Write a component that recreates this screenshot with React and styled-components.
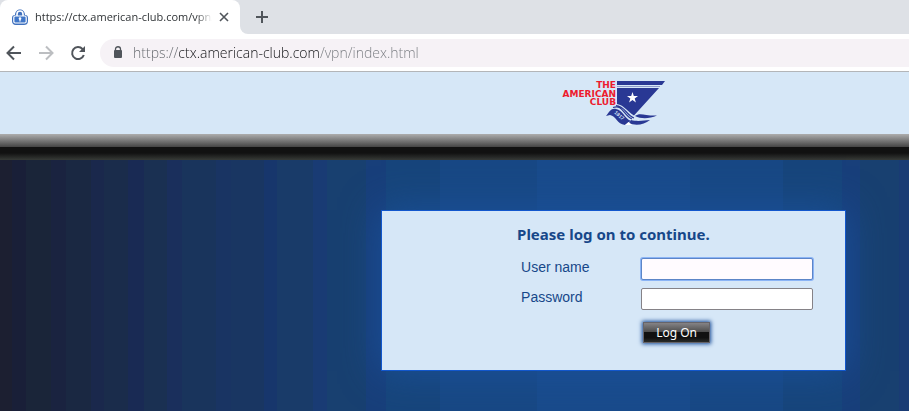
import React from "react";
import styled, { createGlobalStyle } from "styled-components";

const GlobalStyle = createGlobalStyle`
  * { box-sizing: border-box; }
  html, body, #root { height: 100%; }
  body { margin: 0; overflow: hidden; font-family: "Liberation Sans", Arial, sans-serif; }
  button, input { font: inherit; }
`;

const Window = styled.div`
  display: flex;
  flex-direction: column;
  min-height: 100%;
`;

const TabStrip = styled.div`
  display: flex;
  align-items: stretch;
  height: 34px;
  background: #dee1e6;
`;

const Tab = styled.div`
  display: flex;
  align-items: center;
  width: 240px;
  padding: 0 10px 0 12px;
  background: #fff;
  border-radius: 8px 8px 0 0;
`;

const TabTitle = styled.span`
  flex: 1;
  min-width: 0;
  margin: 0 6px 0 7px;
  overflow: hidden;
  white-space: nowrap;
  font: 11px/16px "Open Sans", sans-serif;
  color: #2f3336;
  mask-image: linear-gradient(to right, #000 calc(100% - 16px), transparent);
`;

const IconButton = styled.button`
  display: grid;
  place-items: center;
  width: ${(p) => p.$size}px;
  height: ${(p) => p.$size}px;
  padding: 0;
  border: 0;
  background: none;
  color: ${(p) => (p.disabled ? "#bcbec1" : "#50555b")};
`;

const StripBase = styled.div`
  display: flex;
  flex: 1;
  background: #fff;
`;

const NewTabArea = styled.div`
  display: flex;
  align-items: center;
  flex: 1;
  padding-left: 10px;
  border-bottom-left-radius: 8px;
  background: #dee1e6;
`;

const Toolbar = styled.div`
  display: flex;
  align-items: center;
  height: 38px;
  padding-left: 2px;
  background: #fff;
  border-bottom: 1px solid #b3b5b8;
`;

const NavGroup = styled.div`
  display: flex;
  gap: 8px;
  margin-right: 10px;
`;

const AddressBar = styled.label`
  display: flex;
  align-items: center;
  flex: 1;
  height: 28px;
  padding-left: 13px;
  border-radius: 14px 0 0 14px;
  background: #f6f2f6;
`;

const AddressInput = styled.input`
  flex: 1;
  min-width: 0;
  height: 24px;
  margin-left: 10px;
  padding: 0;
  border: 0;
  outline: 0;
  font: 300 14px/24px "Open Sans", sans-serif;
  color: transparent;
  caret-color: #202124;
  background: linear-gradient(to right, #62666b 46px, #101114 46px, #101114 187px, #777a7f 187px);
  background-clip: text;
`;

const Banner = styled.header`
  display: flex;
  justify-content: center;
  height: 62px;
  padding: 8px 0 0 35%;
  background: #d6e7f7;
`;

const Divider = styled.div`
  height: 26px;
  background: linear-gradient(#adadad 0, #444 13px, #111 13px, #111 19px, #373a37 26px);
`;

const Stage = styled.main`
  display: flex;
  flex: 1;
  align-items: flex-start;
  justify-content: center;
  padding: 50px 0 40px 35%;
  background: linear-gradient(to right,
    #1c1f31 0 12px, #191f38 12px 26px, #1a2539 26px 51px, #1a2340 51px 66px,
    #1a2842 66px 91px, #1a284c 91px 104px, #1a2c4b 104px 128px, #192a54 128px 144px,
    #1a3052 144px 167px, #1a2f5c 167px 182px, #19345c 182px 216px, #193463 216px 231px,
    #193662 231px 264px, #17366c 264px 277px, #193b69 277px 313px, #193b74 313px 327px,
    #184070 327px 366px, #183f7a 366px 386px, #17457b 386px 440px, #184884 440px 537px,
    #194b8b 537px 690px, #184884 690px 783px, #17457b 783px 842px, #183f7a 842px 860px,
    #184070 860px 899px, #193b74 899px);
`;

const LoginCard = styled.form`
  width: 465px;
  padding: 11px 32px 27px 135px;
  border: 1px solid #1257cd;
  background: #d6e7f7;
  box-shadow: 0 0 36px #1a509a;
`;

const Heading = styled.h1`
  margin: 0 0 11px;
  font: bold 15px/24px "Noto Sans", sans-serif;
  color: #174789;
`;

const Fields = styled.div`
  display: grid;
  grid-template-columns: 120px 1fr;
  row-gap: 6px;
  align-items: center;
  padding-left: 4px;
`;

const FieldLabel = styled.label`
  font-size: 14px;
  line-height: 20px;
  padding-bottom: 4px;
  color: #174789;
`;

const Field = styled.input`
  width: 100%;
  height: 22px;
  margin: 1px 0;
  padding: 1px 2px;
  border: 1px solid #858287;
  border-radius: 2px;
  outline: 0;
  background: #fff;
  color: #111;
  font-size: 14px;

  &:focus {
    border-color: #5c85c8;
    background: #fffbff;
    box-shadow: 0 0 0 1px #8bb4f5;
  }
`;

const Submit = styled.button`
  grid-column: 2;
  justify-self: start;
  width: 67px;
  height: 21px;
  margin: 5px 0 0 2px;
  padding: 0;
  border: 1px solid #66646a;
  background: linear-gradient(#8b898c, #4c4c4c 48%, #111 50%, #111 75%, #303230) border-box;
  box-shadow: 0 0 4px 1px #174b96;
  color: #fff;
  font: 12px/18px "Noto Sans", sans-serif;
`;

const Svg = styled.svg`
  display: block;
  flex: none;
  overflow: visible;
`;

const LogoText = styled.text`
  font: bold 9px "DejaVu Sans", sans-serif;
  text-anchor: end;
  fill: #ed1b2e;
`;

const YearText = styled.text`
  font: bold 5px "Liberation Sans", sans-serif;
  fill: #d6e7f7;
`;

function LockBadge() {
  return (
    <Svg width="16" height="16" viewBox="0 0 16 16">
      <path d="M3 6C3-1.5 13-1.5 13 6c2 0 3 1 3 3v3c0 3-2 4-4 4H4c-3 0-4-2-4-4V9c0-2 1-3 3-3Z" fill="#3f70bd" />
      <path d="M5 7V5c0-4 6-4 6 0v2" fill="none" stroke="#fff" strokeWidth="1.6" />
      <rect x="1.8" y="7" width="12.4" height="7" rx="1.5" fill="#3f76c8" stroke="#fff" strokeWidth="1.2" />
      <circle cx="8" cy="9.6" r="1.3" fill="#fff" />
      <path d="M7.4 10h1.2v2.6H7.4Z" fill="#fff" />
    </Svg>
  );
}

function ArrowIcon({ forward }) {
  return (
    <Svg width="16" height="16" viewBox="0 0 16 16" fill="none" stroke="currentColor" strokeWidth="2">
      <path d={forward ? "M1 8H14M8 1.5L14.5 8L8 14.5" : "M15 8H2M8 1.5L1.5 8L8 14.5"} />
    </Svg>
  );
}

function ClubLogo() {
  return (
    <Svg width="106" height="48" viewBox="0 0 106 48" role="img" aria-label="The American Club">
      <LogoText x="55" y="8">THE</LogoText>
      <LogoText x="55" y="17">AMERICAN</LogoText>
      <LogoText x="55" y="25">CLUB</LogoText>
      <path d="M56 1H104L101 5H56ZM56 8H98L73 35.500C68 33 63 25 56 24Z" fill="#293894" />
      <path d="M56 6.500H99" stroke="#8f9ccb" />
      <path d="M71.500 12l1.300 3.900 4.200.100-3.300 2.500 1.200 4-3.400-2.400-3.400 2.400 1.200-4-3.300-2.500 4.200-.100Z" fill="#fff" />
      <path d="M45 36C49 31 50 28 55 29C62 30 63 38 70 41L68 42L64 45C56 44 55 36 49 35Z" fill="#293894" />
      <path d="M52 27.500C62 24 62 35 71 39M55 25.500C64 26 65 35 73 38" fill="none" stroke="#293894" strokeWidth="1.200" />
      <path d="M70 40C78 42 83 40 89 40C83 45 74 46 68 43ZM74 36C79 32 84 36 96 35.500C88 39 80 39 74 36Z" fill="#293894" />
      <path d="M64 45L67.500 42L71 45Z" fill="#fff" />
      <YearText x="53" y="33" transform="rotate(42 53 33)">1917</YearText>
    </Svg>
  );
}

export default function App() {
  return (
    <>
      <GlobalStyle />
      <Window>
        <TabStrip>
          <Tab>
            <LockBadge />
            <TabTitle>https://ctx.american-club.com/vpn/index.html</TabTitle>
            <IconButton $size={12} aria-label="Close tab">
              <Svg width="8" height="8" viewBox="0 0 8 8" stroke="currentColor" strokeWidth="1.6">
                <path d="M0 0L8 8M8 0L0 8" />
              </Svg>
            </IconButton>
          </Tab>
          <StripBase>
            <NewTabArea>
              <IconButton $size={24} aria-label="New tab">
                <Svg width="12" height="12" viewBox="0 0 12 12" stroke="currentColor" strokeWidth="2">
                  <path d="M6 0V12M0 6H12" />
                </Svg>
              </IconButton>
            </NewTabArea>
          </StripBase>
        </TabStrip>
        <Toolbar>
          <NavGroup>
            <IconButton $size={24} aria-label="Back"><ArrowIcon /></IconButton>
            <IconButton $size={24} aria-label="Forward" disabled><ArrowIcon forward /></IconButton>
            <IconButton $size={24} aria-label="Reload">
              <Svg width="16" height="16" viewBox="0 0 16 16">
                <path d="M13.800 10A6 6 0 1 1 12.500 4L13 5" fill="none" stroke="currentColor" strokeWidth="2" />
                <path d="M15 1V7H9Z" fill="currentColor" />
              </Svg>
            </IconButton>
          </NavGroup>
          <AddressBar>
            <Svg width="10" height="13" viewBox="0 0 10 13">
              <rect x="1" y="4" width="8" height="8" rx="1" fill="#50555b" />
              <path d="M2.500 5V3C2.500 0 7.500 0 7.500 3V5" fill="none" stroke="#50555b" strokeWidth="1.300" />
            </Svg>
            <AddressInput aria-label="Address" defaultValue="https://ctx.american-club.com/vpn/index.html" />
          </AddressBar>
        </Toolbar>
        <Banner><ClubLogo /></Banner>
        <Divider />
        <Stage>
          <LoginCard onSubmit={(e) => e.preventDefault()}>
            <Heading>Please log on to continue.</Heading>
            <Fields>
              <FieldLabel htmlFor="user">User name</FieldLabel>
              <Field id="user" autoFocus />
              <FieldLabel htmlFor="password">Password</FieldLabel>
              <Field id="password" type="password" />
              <Submit type="submit">Log On</Submit>
            </Fields>
          </LoginCard>
        </Stage>
      </Window>
    </>
  );
}
